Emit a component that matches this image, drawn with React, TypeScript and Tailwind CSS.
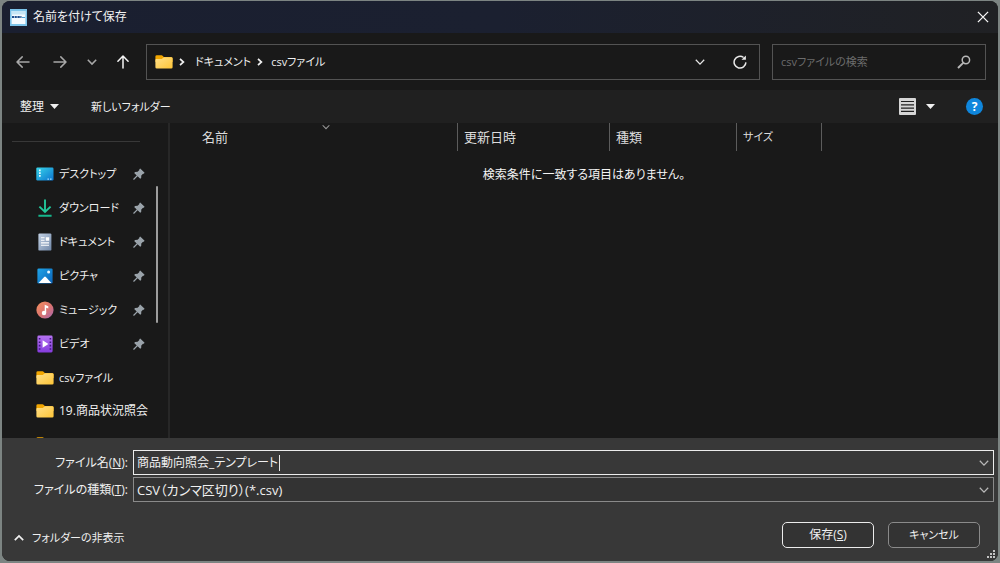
import React, { useState } from "react";

function Chevron({ className = "", w = 10, sw = 1.3 }: { className?: string; w?: number; sw?: number }) {
  return (
    <svg className={className} width={w} height={w} viewBox="0 0 10 10" fill="none" stroke="currentColor" strokeWidth={sw} aria-hidden="true">
      <path d="M0.8 2.8 5 7.1 9.2 2.8" />
    </svg>
  );
}

function ChevronRight() {
  return (
    <svg width="6" height="8" viewBox="0 0 6 8" fill="none" stroke="#f0f0f0" strokeWidth="1.7" aria-hidden="true">
      <path d="M1 0.9 4.4 4 1 7.1" />
    </svg>
  );
}

function Arrow({ rotate = 0 }: { rotate?: number }) {
  return (
    <svg width="16" height="16" viewBox="0 0 16 16" fill="none" stroke="currentColor" strokeWidth="1.5" strokeLinecap="round" strokeLinejoin="round" aria-hidden="true">
      <g transform={`rotate(${rotate} 8 8)`}>
        <path d="M14 8H2.2M7.2 2.9 2 8l5.2 5.1" />
      </g>
    </svg>
  );
}

function Caret() {
  return (
    <svg width="9" height="5" viewBox="0 0 9 5" fill="#f0f0f0" aria-hidden="true">
      <path d="M0 0h9L4.5 5z" />
    </svg>
  );
}

function FolderIcon() {
  return (
    <svg width="18" height="16" viewBox="0 0 18 16" aria-hidden="true">
      <defs>
        <linearGradient id="folder" x1="0" y1="0" x2="1" y2="1">
          <stop offset="0" stopColor="#ffe08a" />
          <stop offset="1" stopColor="#fdc436" />
        </linearGradient>
      </defs>
      <path d="M0.4 2.6Q0.4 1.2 1.8 1.2h4.8q.6 0 1 .5l1.2 1.4h7.2q1.6 0 1.6 1.5V8H0.4z" fill="#f2a600" />
      <path d="M0.4 5.9q0-.8.9-.8h4.9q.7 0 1.2-.5l.8-.9q.4-.4 1-.4h7q1.4 0 1.4 1.3v8.7q0 1.3-1.4 1.3H1.8q-1.4 0-1.4-1.3z" fill="url(#folder)" />
    </svg>
  );
}

function DesktopIcon() {
  return (
    <svg width="18" height="16" viewBox="0 0 18 16" aria-hidden="true">
      <defs>
        <linearGradient id="desk" x1="0" y1="0" x2="1" y2="1">
          <stop offset="0" stopColor="#38d5ea" />
          <stop offset="1" stopColor="#0c74cf" />
        </linearGradient>
      </defs>
      <rect x="0.3" y="1.5" width="17.2" height="13" rx="1.2" fill="url(#desk)" />
      <path d="M3 3.6h1.7v1.7H3zM3 6.3h1.7V8H3zM3 9h1.7v1.7H3z" fill="#e9fbff" />
      <path d="M11.4 12.6h1.6v1.2h-1.6zM14 12.6h1.6v1.2H14z" fill="#9edcff" />
    </svg>
  );
}

function DownloadIcon() {
  return (
    <svg width="18" height="18" viewBox="0 0 18 18" fill="none" strokeWidth="1.9" aria-hidden="true">
      <path d="M9 0.6v12M3.4 7.6 9 13l5.6-5.4" stroke="#22c79a" />
      <path d="M2.4 16.8h13.2" stroke="#16b68c" />
    </svg>
  );
}

function DocumentIcon() {
  return (
    <svg width="18" height="18" viewBox="0 0 18 18" aria-hidden="true">
      <defs>
        <linearGradient id="doc" x1="0" y1="0" x2="1" y2="1">
          <stop offset="0" stopColor="#c3d2e5" />
          <stop offset="1" stopColor="#7188a8" />
        </linearGradient>
      </defs>
      <rect x="2.4" y="0.4" width="13" height="17.2" rx="1.2" fill="url(#doc)" />
      <path d="M5 4.7h3.6M5 7.2h3.6M5 9.9h8M5 12.3h8" stroke="#fff" strokeWidth="1.1" />
      <path d="M9.8 4.2h3.4v3.6H9.8z" fill="#fff" />
    </svg>
  );
}

function PictureIcon() {
  return (
    <svg width="18" height="16" viewBox="0 0 18 16" aria-hidden="true">
      <defs>
        <linearGradient id="pic" x1="0" y1="0" x2="1" y2="1">
          <stop offset="0" stopColor="#1fa5e9" />
          <stop offset="1" stopColor="#0a62b8" />
        </linearGradient>
      </defs>
      <rect x="1.4" y="0.4" width="15.2" height="15.2" rx="1.3" fill="url(#pic)" />
      <path d="M2.6 15 8.2 8.9q.8-.8 1.6 0L15.4 15z" fill="#fff" />
      <circle cx="12.6" cy="4.1" r="1.5" fill="#e8f7ff" />
    </svg>
  );
}

function MusicIcon() {
  return (
    <svg width="18" height="18" viewBox="0 0 18 18" aria-hidden="true">
      <defs>
        <linearGradient id="mus" x1="0" y1="0" x2="1" y2="1">
          <stop offset="0" stopColor="#f6925f" />
          <stop offset="0.55" stopColor="#d97270" />
          <stop offset="1" stopColor="#a567b5" />
        </linearGradient>
      </defs>
      <circle cx="9" cy="9" r="8.6" fill="url(#mus)" />
      <path d="M8.7 12V3.8l3.6 1.5v2.3l-2.1-.8V12z" fill="#fff" />
      <circle cx="8" cy="12" r="2.2" fill="#fff" />
    </svg>
  );
}

function VideoIcon() {
  return (
    <svg width="18" height="18" viewBox="0 0 18 18" aria-hidden="true">
      <defs>
        <linearGradient id="vid" x1="0" y1="0" x2="0" y2="1">
          <stop offset="0" stopColor="#b673f3" />
          <stop offset="1" stopColor="#843bdc" />
        </linearGradient>
      </defs>
      <rect x="1.4" y="0.6" width="15.2" height="16.8" rx="1.3" fill="url(#vid)" />
      <path d="M2.8 3h1.6v1.6H2.8zM2.8 6.4h1.6V8H2.8zM2.8 9.8h1.6v1.6H2.8zM2.8 13.2h1.6v1.6H2.8zM13.6 3h1.6v1.6h-1.6zM13.6 6.4h1.6V8h-1.6zM13.6 9.8h1.6v1.6h-1.6zM13.6 13.2h1.6v1.6h-1.6z" fill="#421a7d" />
      <path d="M6.6 5.2v7.6L12.4 9z" fill="#fff" />
    </svg>
  );
}

function PinIcon() {
  return (
    <svg width="12" height="12" viewBox="0 0 12 12" fill="#9aa3aa" aria-hidden="true">
      <path d="M7.2.4 11.6 4.7 10.8 5.7 10 5.7 8.3 7.4 8.2 10 7.2 10.8 4.6 8.3 1.2 11.7.3 11.7.3 10.8 3.7 7.4 1.2 4.9 2.1 3.9 4.6 3.8 6.4 2 6.3 1.2z" />
    </svg>
  );
}

const pinnedPlaces = [
  { label: "デスクトップ", icon: <DesktopIcon /> },
  { label: "ダウンロード", icon: <DownloadIcon /> },
  { label: "ドキュメント", icon: <DocumentIcon /> },
  { label: "ピクチャ", icon: <PictureIcon /> },
  { label: "ミュージック", icon: <MusicIcon /> },
  { label: "ビデオ", icon: <VideoIcon /> },
];

const recentFolders = [
  { label: "csvファイル", size: "text-[11px]" },
  { label: "19.商品状況照会", size: "text-[12px]" },
  { label: "", size: "text-[12px]" },
];

function TitleBar() {
  return (
    <header className="flex h-8 shrink-0 items-center bg-linear-to-r from-[#1a1f30] via-[#1b2030] to-[#202124] pr-[5px] pl-2">
      <svg width="17" height="17" viewBox="0 0 17 17" aria-hidden="true">
        <rect width="17" height="17" fill="#7cc4ea" />
        <rect x="1.6" y="2" width="13.8" height="13" fill="#f5fbff" />
        <path d="M1.6 2h13.8v3.6H1.6z" fill="#c6e6f6" />
        <path d="M2 8h2.2M4.8 8h2M7.4 8h2.4M10.3 8h1.2" stroke="#20508f" strokeWidth="2" />
        <path d="M12 8.5h3" stroke="#4aa3da" strokeWidth="1.2" />
      </svg>
      <h1 className="ml-1.5 flex-1 text-[12px] font-normal">名前を付けて保存</h1>
      <button type="button" aria-label="閉じる" className="p-1">
        <svg width="12" height="12" viewBox="0 0 12 12" stroke="#f4f4f4" strokeWidth="1.3" aria-hidden="true">
          <path d="M.9.9l10.2 10.2M11.1.9.9 11.1" />
        </svg>
      </button>
    </header>
  );
}

function NavigationBar() {
  return (
    <nav className="flex h-[57px] shrink-0 items-center bg-[#191919] pr-3 pl-3 text-[11px]">
      <div className="flex w-33 shrink-0 items-center pl-px">
        <button type="button" aria-label="戻る" className="w-5 text-[#a8a8a8]"><Arrow /></button>
        <button type="button" aria-label="進む" className="ml-[17px] w-5 text-[#a8a8a8]"><Arrow rotate={180} /></button>
        <button type="button" aria-label="最近表示した場所" className="ml-[15px] w-5 text-[#a8a8a8]"><Chevron sw={1.5} /></button>
        <button type="button" aria-label="上へ" className="ml-2 w-5 text-[#f4f4f4]"><Arrow rotate={90} /></button>
      </div>
      <div className="flex h-9 flex-1 items-center border border-[#535353] pl-2">
        <FolderIcon />
        <span className="ml-1.5"><ChevronRight /></span>
        <button type="button" className="ml-2.5">ドキュメント</button>
        <span className="ml-1.5"><ChevronRight /></span>
        <button type="button" className="ml-2">csvファイル</button>
        <button type="button" aria-label="以前の場所" className="ml-auto p-1 text-[#e4e4e4]"><Chevron /></button>
        <button type="button" aria-label="最新の情報に更新" className="mr-2 ml-5 p-1">
          <svg width="14" height="14" viewBox="0 0 14 14" fill="none" stroke="#e8e8e8" strokeWidth="1.5" aria-hidden="true">
            <path d="M12.9 7.4A5.9 5.9 0 1 1 10.6 2.5" />
            <path d="M12.9.4v4.4H8.5z" fill="#e8e8e8" stroke="none" />
          </svg>
        </button>
      </div>
      <label className="ml-3 flex h-9 w-[214px] shrink-0 items-center border border-[#535353] pr-3.5 pl-2">
        <input type="search" aria-label="csvファイルの検索" placeholder="csvファイルの検索" className="min-w-0 flex-1 bg-transparent outline-none placeholder:text-[#6c6c6c]" />
        <svg width="14" height="14" viewBox="0 0 14 14" fill="none" stroke="#b8b8b8" strokeWidth="1.5" aria-hidden="true">
          <circle cx="8.9" cy="5" r="3.7" />
          <path d="M6.2 7.8 1 13" strokeWidth="1.9" />
        </svg>
      </label>
    </nav>
  );
}

function Toolbar() {
  return (
    <div className="flex h-[33px] shrink-0 items-center bg-[#202020] pr-[15px] pl-4">
      <button type="button" className="flex items-center gap-1.5 pl-0.5">整理<Caret /></button>
      <button type="button" className="ml-8 text-[11px]">新しいフォルダー</button>
      <button type="button" aria-label="表示方法の変更" className="ml-auto flex items-center gap-2.5">
        <svg width="17" height="17" viewBox="0 0 17 17" aria-hidden="true">
          <rect width="17" height="17" rx="1" fill="#d6d6d6" />
          <path d="M2 3.5h13M2 6.8h13M2 10.1h13M2 13.4h13" stroke="#202020" strokeWidth="1.2" />
        </svg>
        <Caret />
      </button>
      <button type="button" aria-label="ヘルプ" className="ml-[31px] flex size-[17px] items-center justify-center rounded-full bg-[#0f86dc] text-[12px] leading-4 font-bold text-white">?</button>
    </div>
  );
}

function Sidebar() {
  return (
    <aside className="flex w-[168px] shrink-0 overflow-hidden border-r-2 border-[#272727]">
      <div className="w-[148px] shrink-0 overflow-hidden">
        <hr className="mt-[18px] mr-2.5 ml-2.5 border-[#383838]" />
        <ul className="mt-[15px]">
          {pinnedPlaces.map((place) => (
            <li key={place.label}>
              <a href="#" className="flex h-[34px] items-center pr-[5px] pl-[34px] text-[11px]">
                <span className="shrink-0">{place.icon}</span>
                <span className="ml-[5px] flex-1 whitespace-nowrap">{place.label}</span>
                <PinIcon />
              </a>
            </li>
          ))}
          {recentFolders.map((folder, index) => (
            <li key={index}>
              <a href="#" aria-label={folder.label || "フォルダー"} className={`flex h-[33px] items-center pl-[34px] ${folder.size}`}>
                <span className="shrink-0"><FolderIcon /></span>
                <span className="ml-[5px] whitespace-nowrap">{folder.label}</span>
              </a>
            </li>
          ))}
        </ul>
      </div>
      <div className="mt-[63px] ml-1.5 h-[137px] w-0.5 rounded-full bg-[#9d9d9d]" />
    </aside>
  );
}

function FileList() {
  const head = "h-7 border-r border-[#5c5c5c] pl-1.5 text-left font-normal";
  return (
    <main className="min-w-0 flex-1">
      <table className="w-full table-fixed border-separate border-spacing-0 text-[#dcdcdc]">
        <colgroup>
          <col className="w-[288px]" />
          <col className="w-[152px]" />
          <col className="w-[127px]" />
          <col className="w-[85px]" />
          <col />
        </colgroup>
        <thead className="text-[13px]">
          <tr>
            <th className="relative h-7 border-r border-[#5c5c5c] pl-8 text-left font-normal">
              名前
              <Chevron w={8} className="absolute top-0 left-[152px] text-[#9a9a9a]" />
            </th>
            <th className={head}>更新日時</th>
            <th className={head}>種類</th>
            <th className={`${head} text-[11px]`}>サイズ</th>
            <th />
          </tr>
        </thead>
        <tbody>
          <tr>
            <td colSpan={5} className="h-12 text-center text-[#f4f4f4]">検索条件に一致する項目はありません。</td>
          </tr>
        </tbody>
      </table>
    </main>
  );
}

function Footer() {
  const [name, setName] = useState("商品動向照会_テンプレート");
  const [editing, setEditing] = useState(true);
  return (
    <footer className="relative shrink-0 bg-[#383838] pt-3 pr-1">
      <div className="grid grid-cols-[126px_1fr] items-center gap-x-[5px] gap-y-0.5">
        <label htmlFor="file-name" className="text-right">ファイル名(<u>N</u>):</label>
        <div className="relative flex h-[25px] items-center border border-[#ececec] pr-1 pl-[3px]">
          <input id="file-name" value={name} onFocus={() => setEditing(false)} onChange={(e) => setName(e.target.value)} className="min-w-0 flex-1 bg-transparent outline-none" />
          {editing && <span className="absolute left-[145px] h-4 w-px bg-[#e8e8e8]" />}
          <Chevron className="text-[#b8b8b8]" />
        </div>
        <label htmlFor="file-type" className="text-right">ファイルの種類(<u>T</u>):</label>
        <div className="relative flex h-[25px] items-center border border-[#8a8a8a] bg-[#333333]">
          <select id="file-type" className="w-full appearance-none bg-transparent pr-5 pl-[3px] text-[13px] outline-none">
            <option>CSV（カンマ区切り）(*.csv)</option>
          </select>
          <Chevron className="pointer-events-none absolute right-1 text-[#b8b8b8]" />
        </div>
      </div>
      <div className="flex items-center pt-5 pr-3.5 pb-[13px] pl-3">
        <button type="button" className="flex items-center gap-2 pt-1.5 text-[11px]">
          <Chevron className="rotate-180" sw={1.7} />
          フォルダーの非表示
        </button>
        <button type="submit" className="ml-auto h-[26px] w-[92px] rounded-[5px] border border-[#ececec] bg-[#333333]">保存(<u>S</u>)</button>
        <button type="button" className="ml-3.5 h-[26px] w-[92px] rounded-[5px] border border-[#8a8a8a] bg-[#333333] text-[11px]">キャンセル</button>
      </div>
      <svg className="absolute right-0.5 bottom-0.5" width="10" height="10" viewBox="0 0 10 10" fill="#c4c4c4" aria-hidden="true">
        <path d="M7 1h2v2H7zM4 4h2v2H4zM7 4h2v2H7zM1 7h2v2H1zM4 7h2v2H4zM7 7h2v2H7z" />
      </svg>
    </footer>
  );
}

export default function App() {
  return (
    <div className="h-screen bg-[#7c8482] px-0.5 pt-px pb-0.5">
      <form
        onSubmit={(e) => e.preventDefault()}
        className="flex h-full flex-col overflow-hidden rounded-lg bg-[#191919] font-['Open_Sans','Noto_Sans_CJK_JP',sans-serif] text-[12px] leading-5 text-[#f0f0f0] [font-feature-settings:'palt']"
      >
        <TitleBar />
        <NavigationBar />
        <Toolbar />
        <div className="flex min-h-0 flex-1">
          <Sidebar />
          <FileList />
        </div>
        <Footer />
      </form>
    </div>
  );
}
